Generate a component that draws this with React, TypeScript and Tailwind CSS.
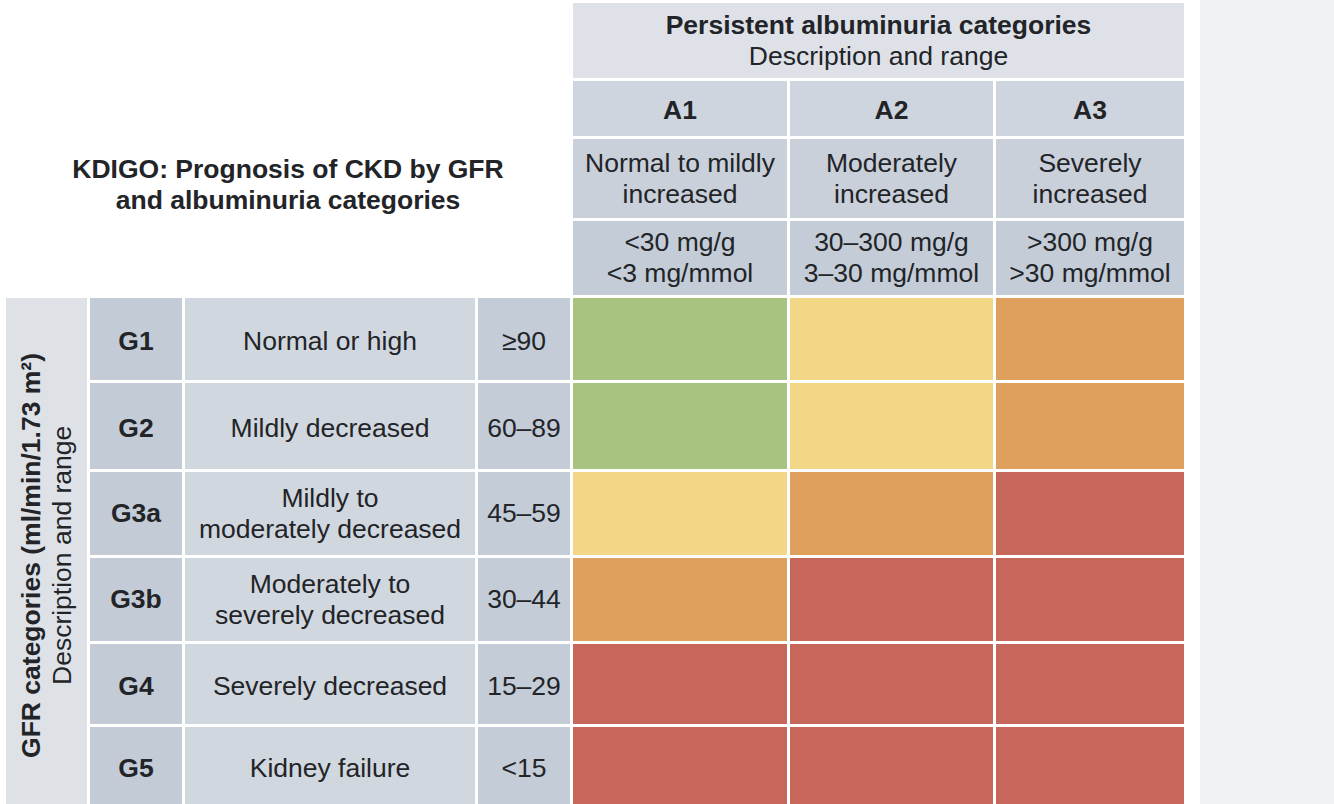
import React from 'react';

const GREEN = 'bg-[#a8c37f]';
const YELLOW = 'bg-[#f2d886]';
const ORANGE = 'bg-[#dea05c]';
const RED = 'bg-[#c7675b]';

const rows: { g: string; desc: React.ReactNode; range: string; cells: string[] }[] = [
  { g: 'G1', desc: 'Normal or high', range: '≥90', cells: [GREEN, YELLOW, ORANGE] },
  { g: 'G2', desc: 'Mildly decreased', range: '60–89', cells: [GREEN, YELLOW, ORANGE] },
  {
    g: 'G3a',
    desc: (
      <>
        Mildly to
        <br />
        moderately decreased
      </>
    ),
    range: '45–59',
    cells: [YELLOW, ORANGE, RED],
  },
  {
    g: 'G3b',
    desc: (
      <>
        Moderately to
        <br />
        severely decreased
      </>
    ),
    range: '30–44',
    cells: [ORANGE, RED, RED],
  },
  { g: 'G4', desc: 'Severely decreased', range: '15–29', cells: [RED, RED, RED] },
  { g: 'G5', desc: 'Kidney failure', range: '<15', cells: [RED, RED, RED] },
];

const albumin = [
  { a: 'A1', desc: ['Normal to mildly', 'increased'], range: ['<30 mg/g', '<3 mg/mmol'] },
  { a: 'A2', desc: ['Moderately', 'increased'], range: ['30–300 mg/g', '3–30 mg/mmol'] },
  { a: 'A3', desc: ['Severely', 'increased'], range: ['>300 mg/g', '>30 mg/mmol'] },
];

function Cell({ className, children }: { className: string; children?: React.ReactNode }) {
  return (
    <div className={`flex items-center justify-center text-center ${className}`}>
      <div>{children}</div>
    </div>
  );
}

export default function App() {
  return (
    <div
      className="flex h-[804px] w-[1334px] overflow-hidden bg-white text-[26.5px] leading-[31px] text-[#222428]"
      style={{ fontFamily: '"Liberation Sans", Arial, sans-serif' }}
    >
      <div className="w-[1200px] shrink-0 pl-[6px] pt-[3px]">
        <div className="grid grid-cols-[81px_92px_290px_92px_214px_203px_188px] grid-rows-[75px_55px_79px_74px_82px_86px_83px_83px_80px_83px] gap-[3px]">
          {/* header */}
          <div className="col-span-4 row-span-1" />
          <Cell className="col-span-3 bg-[#dee2e8]">
            <div className="font-bold">Persistent albuminuria categories</div>
            <div>Description and range</div>
          </Cell>

          <div className="col-span-4 row-span-3 flex items-center justify-center pb-[6px] text-center font-bold">
            <div>
              KDIGO: Prognosis of CKD by GFR
              <br />
              and albuminuria categories
            </div>
          </div>
          {albumin.map((c) => (
            <Cell key={c.a} className="bg-[#cfd5de] pt-[3px] font-bold">
              {c.a}
            </Cell>
          ))}
          {albumin.map((c) => (
            <Cell key={c.a + 'd'} className="bg-[#c9d0da]">
              {c.desc[0]}
              <br />
              {c.desc[1]}
            </Cell>
          ))}
          {albumin.map((c) => (
            <Cell key={c.a + 'r'} className="bg-[#c4ccd7]">
              {c.range[0]}
              <br />
              {c.range[1]}
            </Cell>
          ))}

          {/* left vertical label */}
          <div className="row-span-6 flex items-start justify-center bg-[#dee2e7] pt-[55px]">
            <div className="rotate-180 text-center [writing-mode:vertical-rl]">
              <div className="font-bold">GFR categories (ml/min/1.73 m²)</div>
              <div>Description and range</div>
            </div>
          </div>

          {rows.map((r, i) => {
            const pad = r.g === 'G3a' || r.g === 'G3b' || r.g === 'G5' ? '' : 'pt-[5px]';
            return (
              <React.Fragment key={r.g}>
                <Cell className={`col-start-2 bg-[#c3cbd6] font-bold ${pad} ${i === 0 ? 'row-start-5' : ''}`}>{r.g}</Cell>
                <Cell className={`bg-[#d1d7df] ${pad}`}>{r.desc}</Cell>
                <Cell className={`bg-[#c4ccd7] ${pad}`}>{r.range}</Cell>
                {r.cells.map((c, j) => (
                  <div key={j} className={c} />
                ))}
              </React.Fragment>
            );
          })}
        </div>
      </div>
      <div className="flex-1 bg-[#f1f2f4]" />
    </div>
  );
}
